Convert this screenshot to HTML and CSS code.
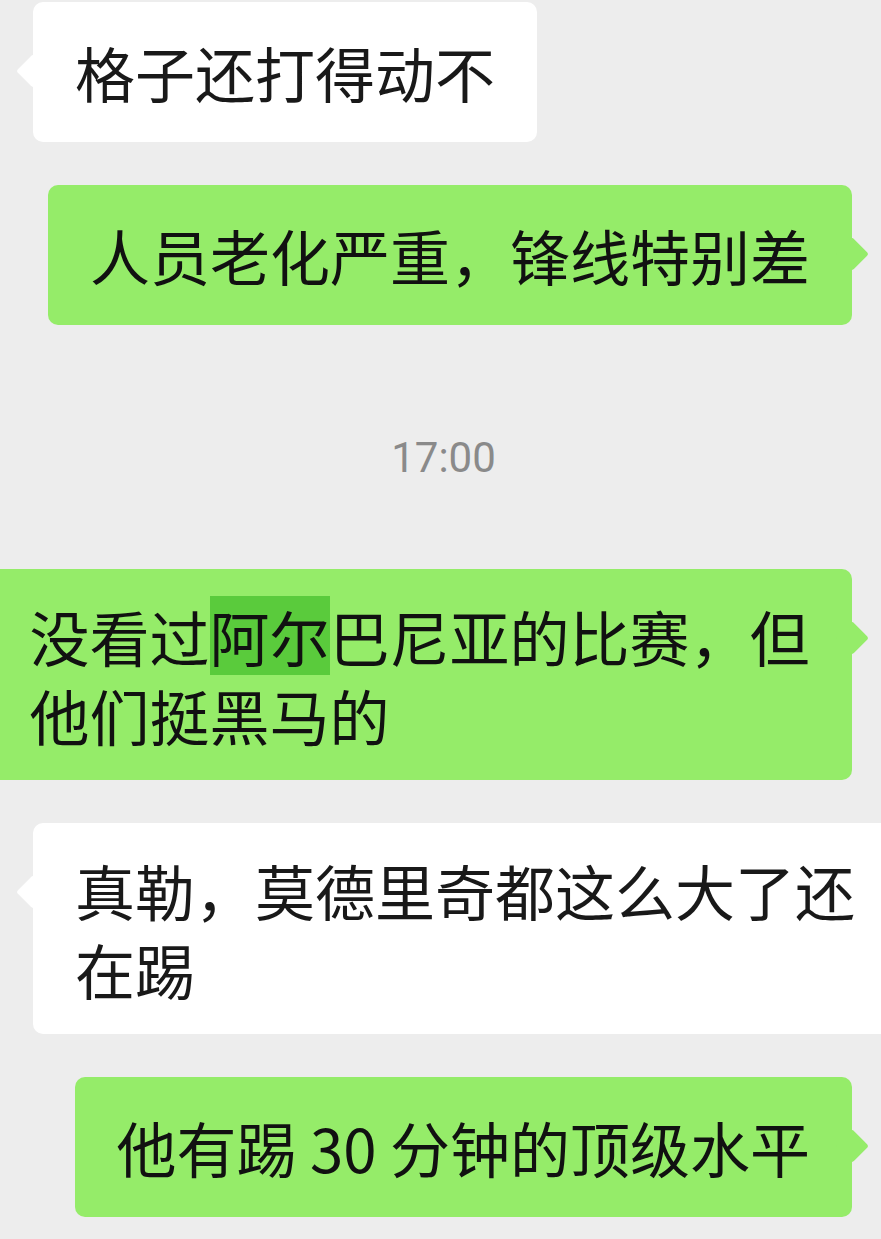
FILE: index.html
```html
<!DOCTYPE html>
<html lang="zh-CN">
<head>
    <meta charset="UTF-8">
    <meta name="viewport" content="width=device-width, initial-scale=1.0">
    <title>聊天</title>
    <link rel="stylesheet" href="styles.css">
</head>
<body>
    <main class="chat">
        <div class="row left first">
            <div class="bubble other">格子还打得动不</div>
        </div>

        <div class="row right">
            <div class="bubble mine">人员老化严重，锋线特别差</div>
        </div>

        <div class="time">17:00</div>

        <div class="row right">
            <div class="bubble mine multi">没看过<span class="hl">阿尔</span>巴尼亚的比赛，但他们挺黑马的</div>
        </div>

        <div class="row left">
            <div class="bubble other multi">真勒，莫德里奇都这么大了还在踢</div>
        </div>

        <div class="row right">
            <div class="bubble mine">他有踢 30 分钟的顶级水平</div>
        </div>
    </main>
</body>
</html>
```

FILE: styles.css
```css
html, body {
    overflow: hidden;
}
body {
    margin: 0;
    background-color: #ededed;
    font-family: "Noto Sans CJK SC", "Noto Sans", sans-serif;
}
.chat {
    display: flex;
    flex-direction: column;
    padding-top: 2px;
}
.row {
    display: flex;
    margin-bottom: 43px;
}
.row.left {
    justify-content: flex-start;
    padding-left: 33px;
}
.row.right {
    justify-content: flex-end;
    padding-right: 29px;
}
.bubble {
    position: relative;
    flex-shrink: 0;
    max-width: 780.5px;
    padding: 30px 42px 31px;
    border-radius: 10px;
    font-size: 60px;
    line-height: 79px;
    color: #191919;
}
.bubble.multi {
    padding: 27px 42px 26px;
}
.bubble::before {
    content: "";
    position: absolute;
    top: 57px;
    width: 24px;
    height: 24px;
    border-radius: 3px;
    transform: rotate(45deg);
}
.other {
    background-color: #ffffff;
}
.other::before {
    left: -12px;
    background-color: #ffffff;
}
.mine {
    background-color: #95ec69;
    color: #111;
}
.mine::before {
    right: -12px;
    background-color: #95ec69;
}
.hl {
    display: inline-block;
    line-height: 79px;
    background-color: #5acb3c;
}
.time {
    margin: 60px 0 81px;
    height: 60px;
    line-height: 60px;
    text-align: center;
    font-family: Roboto, "Noto Sans", sans-serif;
    font-size: 42px;
    color: #8a8a8a;
    padding-left: 6px;
}
```
